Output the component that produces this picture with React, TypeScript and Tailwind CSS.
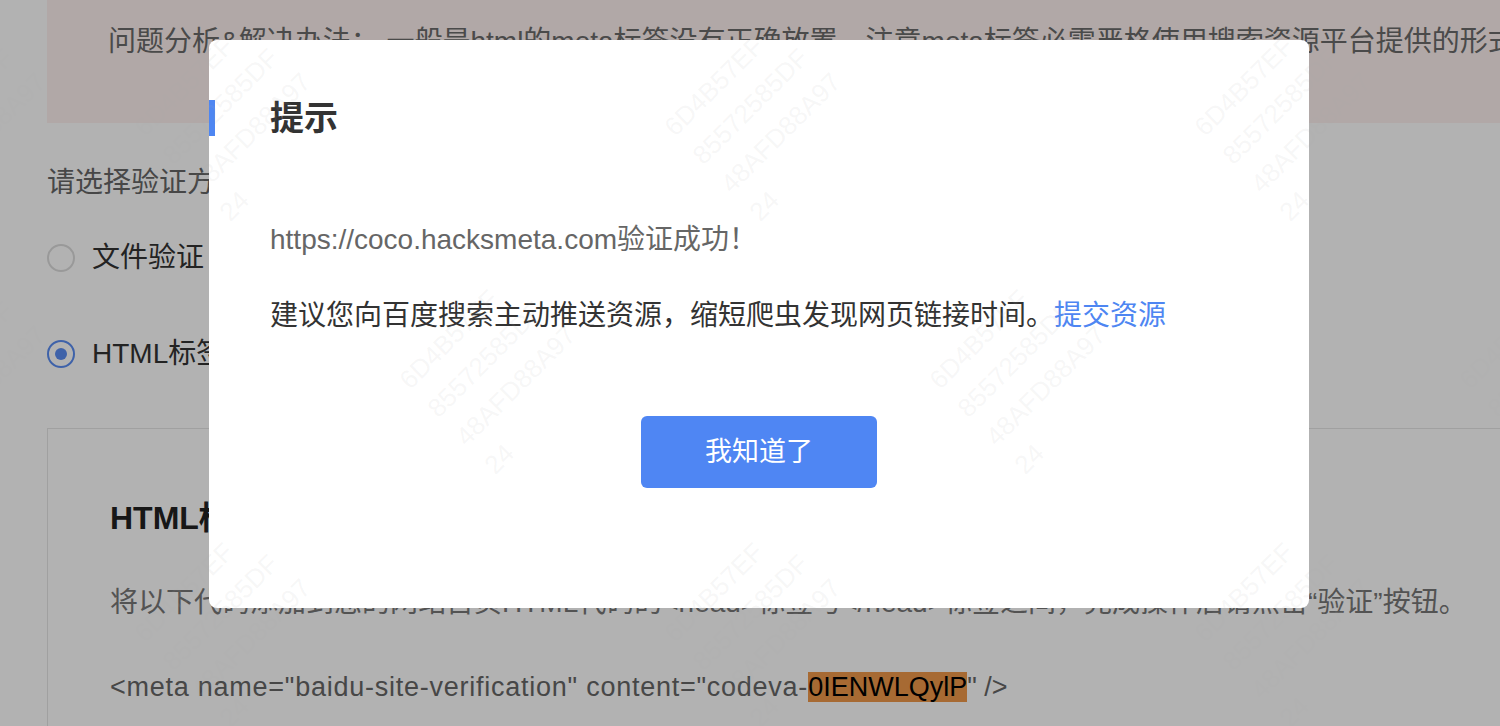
import React from "react";

const marks = [
  { x: 245, y: -143 }, { x: 775, y: -143 }, { x: 1305, y: -143 },
  { x: -20, y: 110 }, { x: 245, y: 110 }, { x: 775, y: 110 }, { x: 1305, y: 110 },
  { x: -20, y: 363 }, { x: 510, y: 363 }, { x: 1040, y: 363 }, { x: 1570, y: 363 },
  { x: 245, y: 616 }, { x: 775, y: 616 }, { x: 1305, y: 616 },
  { x: -20, y: 869 }, { x: 510, y: 869 }, { x: 1040, y: 869 },
];

function Watermark({ x, y }: { x: number; y: number }) {
  return (
    <div
      className="pointer-events-none absolute w-[180px] h-[160px] -ml-[90px] -mt-[80px] -rotate-45 text-[26px] leading-[40px] text-[rgba(170,170,170,0.1)] whitespace-nowrap select-none"
      style={{ left: x, top: y }}
    >
      <div>6D4B57EF</div>
      <div>85572585DF</div>
      <div>48AFD88A97</div>
      <div>24</div>
    </div>
  );
}

function Radio({ checked, label }: { checked?: boolean; label: string }) {
  return (
    <div className="flex items-center h-[40px]">
      {checked ? (
        <span className="flex items-center justify-center w-[28px] h-[28px] rounded-full border-2 border-[#5a8df3]">
          <span className="w-[12px] h-[12px] rounded-full bg-[#5a8df3]" />
        </span>
      ) : (
        <span className="w-[28px] h-[28px] rounded-full border-2 border-[#dcdcdc] bg-white" />
      )}
      <span className="ml-[17px] text-[28px] text-[#333]">{label}</span>
    </div>
  );
}

export default function App() {
  return (
    <div className="relative w-[1500px] h-[726px] overflow-hidden bg-white font-['Liberation_Sans','Noto_Sans_CJK_SC',sans-serif]">
      {/* page under the dialog */}
      <div className="pl-[47px] w-[1800px]">
        <div className="h-[123px] bg-[#fef1ef] pl-[61px] pt-[22px] text-[28px] leading-[40px] text-[#6a6a6a] whitespace-nowrap">
          问题分析&amp;解决办法： 一般是html的meta标签没有正确放置，注意meta标签必需严格使用搜索资源平台提供的形式，不要擅自修改。
        </div>
        <div className="mt-[40px] text-[28px] leading-[40px] text-[#666]">请选择验证方式：</div>
        <div className="mt-[35px]">
          <Radio label="文件验证" />
        </div>
        <div className="mt-[56px]">
          <Radio checked label="HTML标签验证" />
        </div>
        <div className="mt-[54px] h-[400px] border border-[#e5e5e5] pl-[62px] pt-[69px]">
          <div className="text-[32px] leading-[40px] font-bold text-[#222]">HTML标签验证</div>
          <div className="mt-[45px] text-[28px] leading-[40px] text-[#777] whitespace-nowrap">
            将以下代码添加到您的网站首页HTML代码的&lt;head&gt;标签与&lt;/head&gt;标签之间，完成操作后请点击“验证”按钮。
          </div>
          <div className="mt-[44px] text-[27px] leading-[40px] text-[#666] whitespace-nowrap">
            <span className="tracking-[0.75px]">&lt;meta name="baidu-site-verification" content="codeva-</span>
            <span className="bg-[#f09949] text-black">0IENWLQylP</span>
            <span>" /&gt;</span>
          </div>
        </div>
      </div>

      {/* mask */}
      <div className="absolute inset-0 bg-black/30" />

      {/* dialog */}
      <div className="absolute left-[209px] top-[40px] w-[1100px] h-[568px] rounded-lg bg-white">
        <div className="mt-[60px] flex items-center h-[36px]">
          <span className="w-[6px] h-[36px] bg-[#4e86f2]" />
          <span className="ml-[55px] text-[34px] leading-[36px] font-bold text-[#333]">提示</span>
        </div>
        <div className="pl-[61px] mt-[84px] text-[28px] leading-[40px] text-[#666]">
          https://coco.hacksmeta.com验证成功！
        </div>
        <div className="pl-[61px] mt-[36px] text-[28px] leading-[40px] text-[#333]">
          建议您向百度搜索主动推送资源，缩短爬虫发现网页链接时间。<span className="text-[#4e86f2]">提交资源</span>
        </div>
        <div className="mt-[80px] flex justify-center">
          <button className="w-[236px] h-[72px] rounded-md bg-[#4f86f3] text-white text-[27px]">我知道了</button>
        </div>
      </div>

      {marks.map((m, i) => (
        <Watermark key={i} x={m.x} y={m.y} />
      ))}
    </div>
  );
}
